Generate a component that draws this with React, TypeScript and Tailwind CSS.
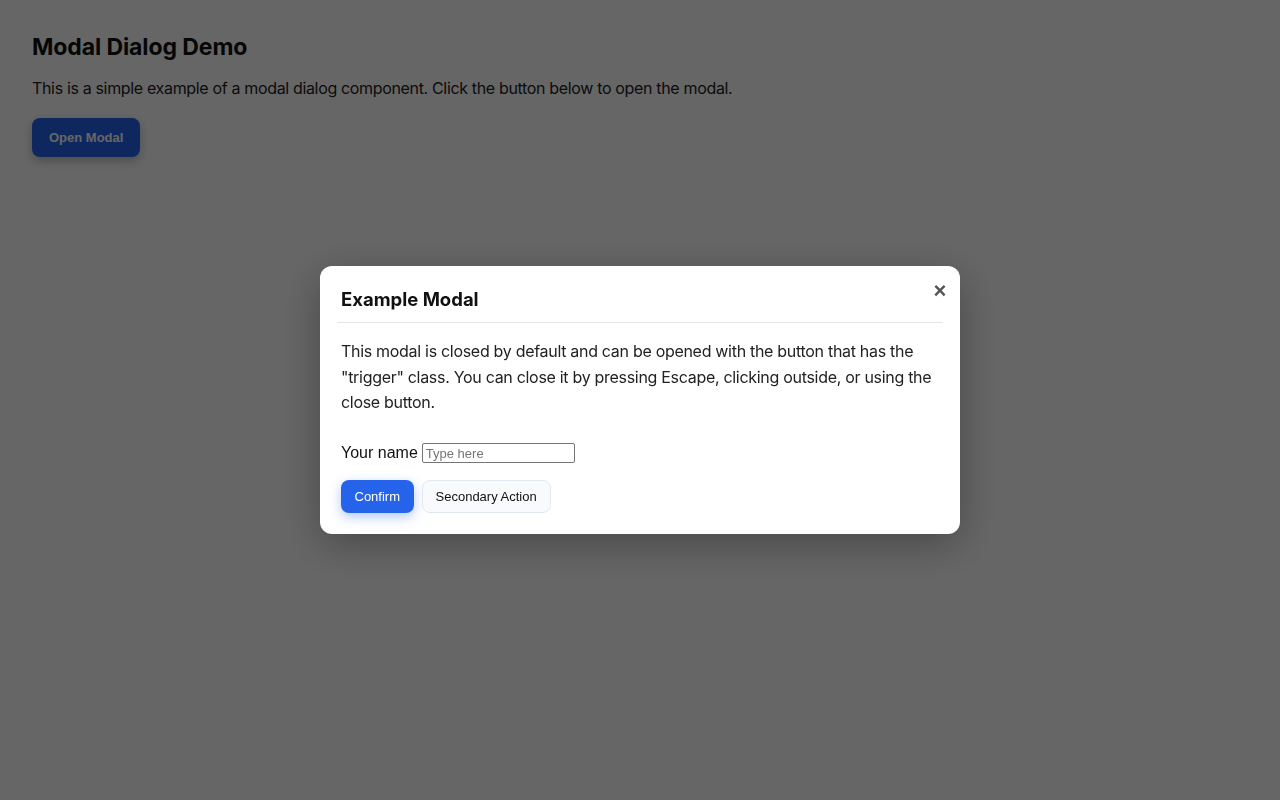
import { useState } from "react";

export default function App() {
  const [open, setOpen] = useState(true);
  const [name, setName] = useState("");

  return (
    <div className="relative min-h-screen bg-white p-8 text-[#111] font-['Inter',sans-serif]">
      <h1 className="text-[23px] leading-[30px] font-bold tracking-[-0.1px]">Modal Dialog Demo</h1>
      <p className="mt-[14px] text-[16px] leading-[24px] tracking-[-0.34px] text-[#222]">
        This is a simple example of a modal dialog component. Click the button below to open the modal.
      </p>
      <button
        onClick={() => setOpen(true)}
        className="trigger mt-[18px] h-[39px] rounded-lg bg-[#2563eb] px-[17px] text-[13px] font-bold text-white shadow-[0_4px_10px_rgba(0,0,0,0.25)] font-['Liberation_Sans',Arial,sans-serif]"
      >
        Open Modal
      </button>

      {open ? (
        <div
          className="fixed inset-0 flex items-center justify-center bg-black/60"
          onClick={() => setOpen(false)}
        >
          <div
            className="relative w-[640px] rounded-xl bg-white px-[17px] pt-5 pb-[21px] shadow-[0_10px_40px_rgba(0,0,0,0.3)]"
            onClick={(event) => event.stopPropagation()}
          >
            <button
              onClick={() => setOpen(false)}
              className="absolute right-[4px] top-[13px] flex h-6 w-8 items-center justify-center text-[22px] font-bold leading-none text-[#555] font-['Liberation_Sans',Arial,sans-serif]"
              aria-label="Close"
            >
              ×
            </button>
            <div className="border-b border-[#e5e5e5] px-1 pb-[10px]">
              <h2 className="text-[18.5px] leading-[26px] font-bold text-[#111]">Example Modal</h2>
            </div>
            <div className="px-1">
              <p className="mt-[16px] text-[16px] leading-[25.6px] tracking-[-0.3px] text-[#222]">
                This modal is closed by default and can be opened with the button that has the "trigger" class. You can
                close it by pressing Escape, clicking outside, or using the close button.
              </p>
              <div className="mt-[24px] flex items-center gap-1 text-[16px] leading-[25px] text-[#111] font-['Liberation_Sans',Arial,sans-serif]">
                <label htmlFor="name">Your name</label>
                <input
                  id="name"
                  value={name}
                  onChange={(event) => setName(event.target.value)}
                  placeholder="Type here"
                  className="mt-[2px] h-[20px] w-[153px] rounded-[2px] border border-[#767676] px-[3px] text-[13px] placeholder:text-[#757575] outline-none"
                />
              </div>
              <div className="mt-[15px] flex gap-2 font-['Liberation_Sans',Arial,sans-serif] text-[13px]">
                <button className="h-[33px] rounded-lg bg-[#2563eb] px-[13.5px] text-white shadow-[0_4px_12px_rgba(37,99,235,0.35)]">
                  Confirm
                </button>
                <button className="h-[33px] rounded-lg border border-[#e2e8f0] bg-[#f8fafc] px-[13px] text-[#111]">
                  Secondary Action
                </button>
              </div>
            </div>
          </div>
        </div>
      ) : null}
    </div>
  );
}
